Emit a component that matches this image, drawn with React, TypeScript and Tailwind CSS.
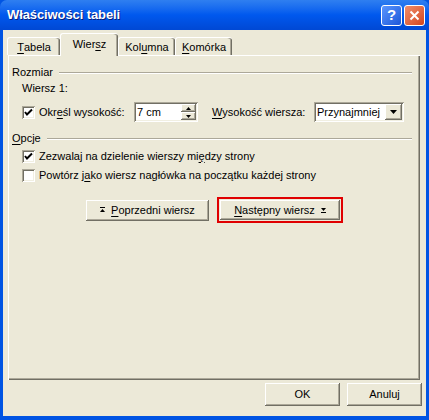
import React from 'react';

const raised =
  'bg-[#ECE9D8] shadow-[inset_-1px_-1px_0_#716f64,inset_1px_1px_0_#ffffff,inset_-2px_-2px_0_#aca899]';
const sunken =
  'bg-white shadow-[inset_1px_1px_0_#aca899,inset_-1px_-1px_0_#ffffff,inset_2px_2px_0_#716f64,inset_-2px_-2px_0_#f1efe2]';

const U = ({ children }: { children: React.ReactNode }) => <span className="underline underline-offset-2">{children}</span>;

const CheckBox = ({ checked }: { checked?: boolean }) => (
  <span className={`w-[13px] h-[13px] shrink-0 flex items-center justify-center ${sunken}`}>
    {checked && (
      <svg width="9" height="9" viewBox="0 0 9 9">
        <path d="M1 4 L3 6.5 L8 1.5" stroke="#000" strokeWidth="2" fill="none" />
      </svg>
    )}
  </span>
);

const Etched = () => (
  <div className="flex-1 flex flex-col">
    <div className="h-px bg-[#aca899]" />
    <div className="h-px bg-white" />
  </div>
);

const Tab = ({ children, active, w }: { children: React.ReactNode; active?: boolean; w: string }) => (
  <div
    className={`relative flex items-center justify-center rounded-t-[3px] border-l border-t border-white bg-[#ECE9D8] shadow-[inset_-1px_0_0_#716f64,inset_-2px_0_0_#aca899] ${w} ${
      active ? 'h-[23px] z-10 -mb-px pb-[2px]' : 'h-[18px] pt-[1px]'
    }`}
  >
    {children}
  </div>
);

const UpArrow = () => (
  <svg width="5" height="6" viewBox="0 0 5 6">
    <rect x="0" y="0" width="5" height="1" fill="#000" />
    <path d="M2.5 2 L5 5 L0 5 Z" fill="#000" />
  </svg>
);

const DownArrow = () => (
  <svg width="5" height="6" viewBox="0 0 5 6">
    <path d="M0 1 L5 1 L2.5 4 Z" fill="#000" />
    <rect x="0" y="5" width="5" height="1" fill="#000" />
  </svg>
);

export default function App() {
  return (
    <div className="w-[429px] h-[420px] flex flex-col bg-[#0054E3] font-['Liberation_Sans',Arial,sans-serif] text-[11px] text-black overflow-hidden">
      {/* Title bar */}
      <div className="h-[30px] shrink-0 flex items-center pl-[7px] pr-[4px] bg-gradient-to-b from-[#2f7ff0] via-[#0058ee] to-[#0048d4] rounded-t-[7px]">
        <span className="text-white font-bold text-[13px] tracking-[-0.1px] [text-shadow:1px_1px_0_#0a1e7a] flex-1">Właściwości tabeli</span>
        <div className="flex gap-[2px]">
          <div className="w-[21px] h-[21px] rounded-[3px] border border-white bg-gradient-to-br from-[#5a96ff] to-[#1c56d8] flex items-center justify-center text-white font-bold text-[15px]">?</div>
          <div className="w-[21px] h-[21px] rounded-[3px] border border-white bg-gradient-to-br from-[#f08d6a] to-[#d2431b] flex items-center justify-center">
            <svg width="11" height="11" viewBox="0 0 11 11">
              <path d="M1.5 1.5 L9.5 9.5 M9.5 1.5 L1.5 9.5" stroke="#fff" strokeWidth="2" />
            </svg>
          </div>
        </div>
      </div>

      {/* Body */}
      <div className="flex-1 mx-[3px] mb-[4px] bg-[#ECE9D8] flex flex-col pl-[5px] pr-[6px]">
        {/* Tabs */}
        <div className="flex items-end -ml-px mt-[3px] h-[22px]">
          <Tab w="w-[53px]"><U>T</U>abela</Tab>
          <Tab active w="w-[58px]">Wier<U>s</U>z</Tab>
          <Tab w="w-[57px]">Kol<U>u</U>mna</Tab>
          <Tab w="w-[57px]"><U>K</U>omórka</Tab>
        </div>

        {/* Panel */}
        <div className="h-[325px] border-l border-t border-white shadow-[inset_-1px_-1px_0_#716f64,inset_-2px_-2px_0_#aca899] flex flex-col pl-[3px] pr-[8px] pt-[10px]">
          <div className="flex items-center gap-[6px] h-[13px]">
            <span>Rozmiar</span>
            <Etched />
          </div>
          <div className="pl-[10px] mt-[3px] h-[13px] leading-[13px]">Wiersz 1:</div>
          <div className="flex items-center pl-[10px] mt-[7px] h-[20px]">
            <CheckBox checked />
            <span className="ml-[4px] w-[95px]">Okr<U>e</U>śl wysokość:</span>
            <div className={`w-[64px] h-[20px] flex items-center pl-[3px] pr-[2px] ${sunken}`}>
              <span className="flex-1">7 cm</span>
              <div className="flex flex-col w-[15px] h-[16px]">
                <div className={`flex-1 flex items-center justify-center ${raised}`}>
                  <svg width="5" height="3" viewBox="0 0 5 3"><path d="M2.5 0 L5 3 L0 3 Z" fill="#000" /></svg>
                </div>
                <div className={`flex-1 flex items-center justify-center ${raised}`}>
                  <svg width="5" height="3" viewBox="0 0 5 3"><path d="M0 0 L5 0 L2.5 3 Z" fill="#000" /></svg>
                </div>
              </div>
            </div>
            <span className="ml-[14px] w-[102px]"><U>W</U>ysokość wiersza:</span>
            <div className={`w-[90px] h-[20px] flex items-center pl-[3px] pr-[2px] ${sunken}`}>
              <span className="flex-1">Przynajmniej</span>
              <div className={`w-[17px] h-[16px] flex items-center justify-center ${raised}`}>
                <svg width="7" height="4" viewBox="0 0 7 4"><path d="M0 0 L7 0 L3.5 4 Z" fill="#000" /></svg>
              </div>
            </div>
          </div>
          <div className="flex items-center gap-[6px] h-[13px] mt-[10px]">
            <span><U>O</U>pcje</span>
            <Etched />
          </div>
          <div className="flex items-center pl-[10px] mt-[2px] h-[18px] gap-[4px]">
            <CheckBox checked />
            <span>Zezwalaj na dzielenie wierszy mi<U>ę</U>dzy strony</span>
          </div>
          <div className="flex items-center pl-[10px] mt-[1px] h-[18px] gap-[4px]">
            <CheckBox />
            <span>Powtórz j<U>a</U>ko wiersz nagłówka na początku każdej strony</span>
          </div>
          <div className="flex items-center pl-[74px] mt-[13px] gap-[8px]">
            <div className={`w-[123px] h-[21px] flex items-center justify-center gap-[6px] ${raised}`}>
              <UpArrow />
              <span><U>P</U>oprzedni wiersz</span>
            </div>
            <div className="border-2 border-[#e00000] p-px">
              <div className={`w-[120px] h-[20px] flex items-center justify-center gap-[6px] ${raised}`}>
                <span><U>N</U>astępny wiersz</span>
                <DownArrow />
              </div>
            </div>
          </div>
        </div>

        {/* Bottom buttons */}
        <div className="flex justify-end gap-[7px] mt-[3px] -mr-[2px]">
          <div className={`w-[75px] h-[23px] flex items-center justify-center ${raised}`}>OK</div>
          <div className={`w-[75px] h-[23px] flex items-center justify-center ${raised}`}>Anuluj</div>
        </div>
      </div>
    </div>
  );
}
